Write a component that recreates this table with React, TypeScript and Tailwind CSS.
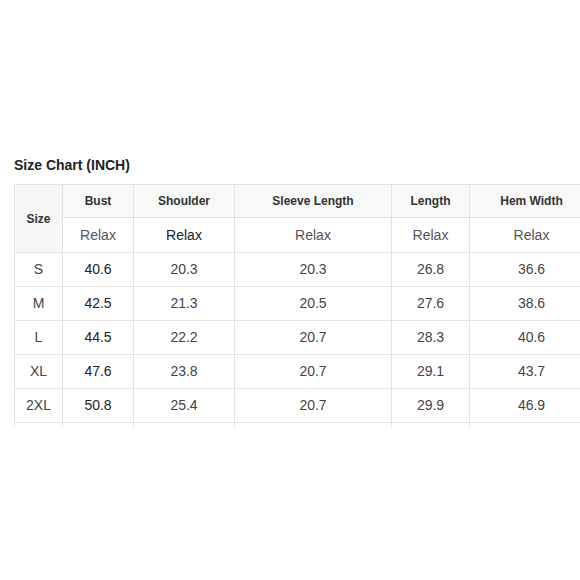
import React from "react";

const cols = [48, 71, 101, 157, 78, 124];
const rows = [
  ["S", "40.6", "20.3", "20.3", "26.8", "36.6"],
  ["M", "42.5", "21.3", "20.5", "27.6", "38.6"],
  ["L", "44.5", "22.2", "20.7", "28.3", "40.6"],
  ["XL", "47.6", "23.8", "20.7", "29.1", "43.7"],
  ["2XL", "50.8", "25.4", "20.7", "29.9", "46.9"],
];
const heads = ["Bust", "Shoulder", "Sleeve Length", "Length", "Hem Width"];

export default function App() {
  return (
    <div
      className="w-[580px] h-[580px] overflow-hidden bg-white text-[#333]"
      style={{ fontFamily: '"Liberation Sans", Arial, sans-serif' }}
    >
      <div className="pt-[157px] pl-[14px]">
        <div className="text-[14px] font-bold leading-[16px] text-[#222]">Size Chart (INCH)</div>
        <table className="mt-[11px] border-collapse table-fixed w-[579px] text-center">
          <colgroup>
            {cols.map((w, i) => (
              <col key={i} style={{ width: w }} />
            ))}
          </colgroup>
          <tbody>
            <tr className="h-[33px]">
              <td rowSpan={2} className="border border-[#e3e3e3] bg-[#f7f7f7] text-[12px] font-bold">
                Size
              </td>
              {heads.map((h) => (
                <td key={h} className="border border-[#e3e3e3] bg-[#f8f8f8] text-[12px] font-bold">
                  {h}
                </td>
              ))}
            </tr>
            <tr className="h-[35px]">
              {heads.map((h, i) => (
                <td key={h} className={`border border-[#e3e3e3] text-[14px] ${i === 1 ? "text-[#222]" : "text-[#555]"}`}>
                  Relax
                </td>
              ))}
            </tr>
            {rows.map((r) => (
              <tr key={r[0]} className="h-[34px]">
                {r.map((c, i) => (
                  <td key={i} className={`border border-[#e3e3e3] text-[14px] ${i === 1 ? "text-[#222]" : "text-[#444]"}`}>
                    {c}
                  </td>
                ))}
              </tr>
            ))}
            <tr className="h-[4px]">
              {cols.map((_, i) => (
                <td key={i} className="border-x border-[#e3e3e3] p-0"></td>
              ))}
            </tr>
          </tbody>
        </table>
      </div>
    </div>
  );
}
